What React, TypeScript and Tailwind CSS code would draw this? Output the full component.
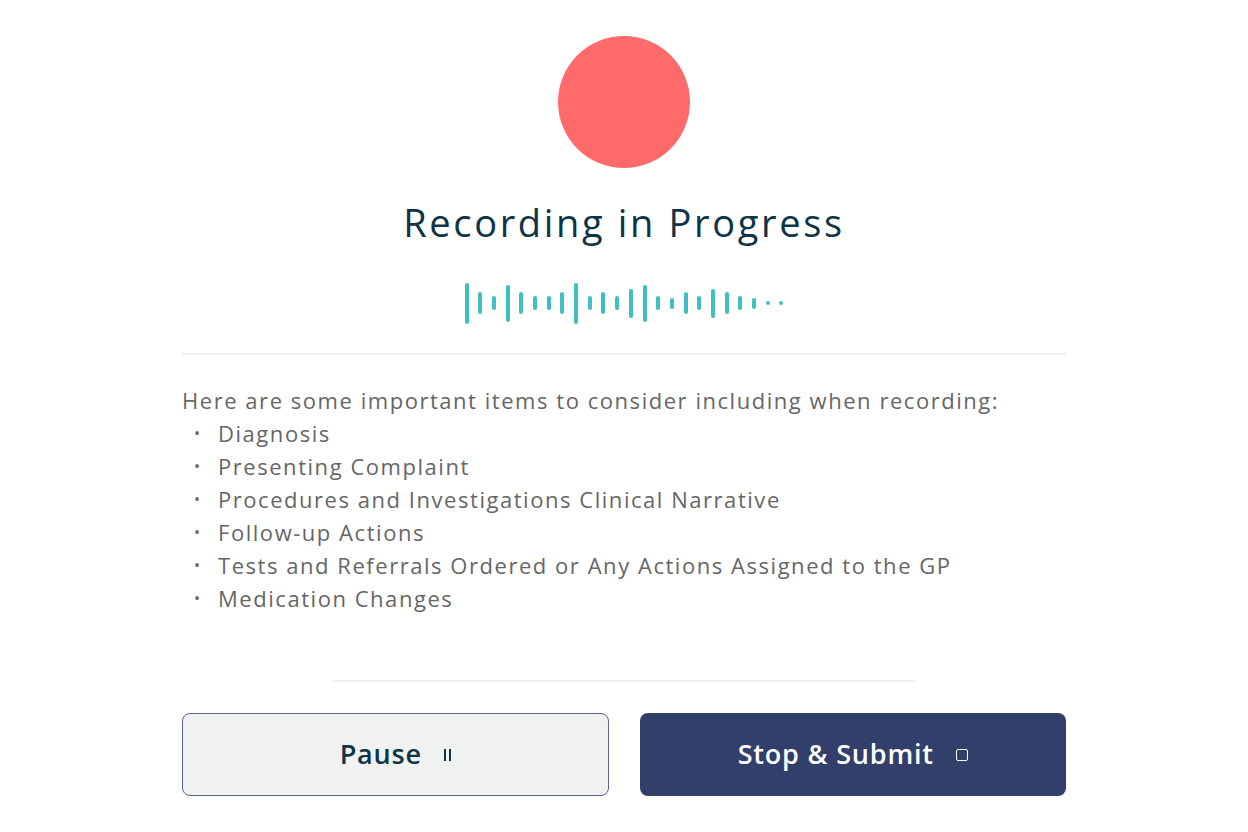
import React from "react"

const bars = [41, 22, 14, 37, 22, 14, 14, 22, 41, 14, 22, 14, 29, 37, 14, 11, 22, 14, 29, 22, 14, 11, 4, 4]

const items = [
    "Diagnosis",
    "Presenting Complaint",
    "Procedures and Investigations Clinical Narrative",
    "Follow-up Actions",
    "Tests and Referrals Ordered or Any Actions Assigned to the GP",
    "Medication Changes",
]

const Waveform = () => (
    <div className="flex items-center h-[44px] gap-[9.7px]">
        {bars.map((h, i) => (
            <span key={i} className="block w-[4px] rounded-full bg-[#3cc1c0]" style={{ height: h }} />
        ))}
    </div>
)

export default function App() {
    return (
        <div className="w-full min-h-screen bg-white flex justify-center font-['Open_Sans','Noto_Sans',sans-serif]">
            <div className="w-[884px] flex flex-col items-center pt-[36px]">
                <div className="w-[132px] h-[132px] rounded-full bg-[#ff6b6b]" />
                <h1 className="mt-[32px] text-[38px] leading-[44px] text-[#0d3447] font-medium tracking-[0.07em]">
                    Recording in Progress
                </h1>
                <div className="mt-[37px]">
                    <Waveform />
                </div>
                <div className="w-full h-[2px] bg-[#efefef] mt-[28px]" />
                <div className="w-full mt-[29px] text-[22px] leading-[33px] text-[#666666] tracking-[0.07em]">
                    <p>Here are some important items to consider including when recording:</p>
                    <ul className="pl-[12px]">
                        {items.map((t) => (
                            <li key={t} className="flex">
                                <span className="w-[24px] text-[16px]">•</span>
                                <span>{t}</span>
                            </li>
                        ))}
                    </ul>
                </div>
                <div className="w-[584px] h-[2px] bg-[#efefef] mt-[65px]" />
                <div className="w-full grid grid-cols-2 gap-[31px] mt-[31px]">
                    <button className="h-[83px] rounded-[8px] border border-[#5c6391] bg-[#f0f2f1] text-[#0d3447] text-[27px] font-semibold tracking-[0.03em] flex items-center justify-center gap-[22px]">
                        Pause
                        <span className="flex gap-[3px] items-center">
                            <span className="block w-[2px] h-[12px] bg-[#0d3447]" />
                            <span className="block w-[2px] h-[12px] bg-[#0d3447]" />
                        </span>
                    </button>
                    <button className="h-[83px] rounded-[8px] bg-[#333f6b] text-white text-[27px] font-semibold tracking-[0.03em] flex items-center justify-center gap-[22px]">
                        Stop &amp; Submit
                        <span className="block w-[12px] h-[12px] border-[1.5px] border-white rounded-[2px]" />
                    </button>
                </div>
            </div>
        </div>
    )
}
